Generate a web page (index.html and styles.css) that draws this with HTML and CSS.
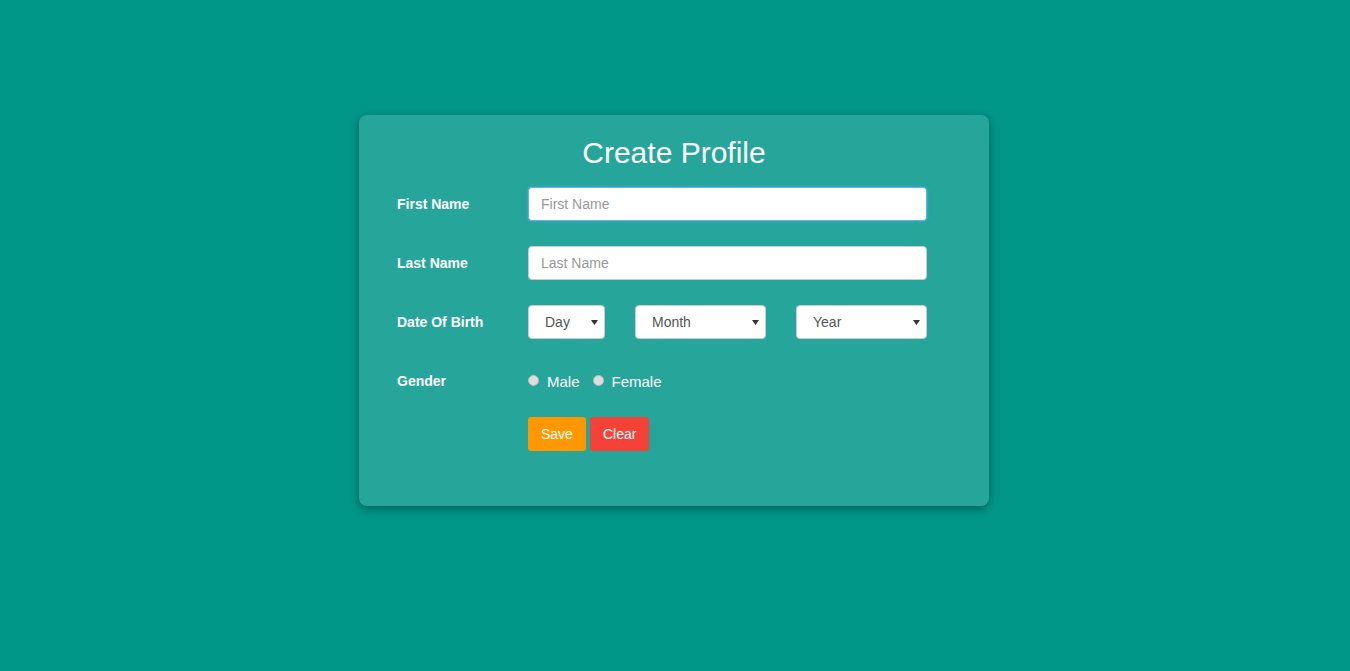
FILE: index.html
```html
<!DOCTYPE html>
<html>
<head>
<meta charset="utf-8">
<link rel="stylesheet" href="styles.css">
</head>
<body>
<div class="card">
  <h1 class="title">Create Profile</h1>
  <form class="form">
    <label class="label">First Name</label>
    <div class="control"><input class="input focused" type="text" placeholder="First Name"></div>
    <label class="label">Last Name</label>
    <div class="control"><input class="input" type="text" placeholder="Last Name"></div>
    <label class="label">Date Of Birth</label>
    <div class="control dob">
      <select class="select day"><option>Day</option></select>
      <select class="select month"><option>Month</option></select>
      <select class="select year"><option>Year</option></select>
    </div>
    <label class="label">Gender</label>
    <div class="control radios">
      <label class="radio"><span class="dot"></span>Male</label>
      <label class="radio"><span class="dot"></span>Female</label>
    </div>
    <span></span>
    <div class="control buttons">
      <button type="button" class="btn save">Save</button>
      <button type="button" class="btn clear">Clear</button>
    </div>
  </form>
</div>
</body>
</html>
```
FILE: styles.css
```css
html, body {
  margin: 0;
  padding: 0;
  height: 100%;
}
body {
  background: #009688;
  font-family: "Liberation Sans", Arial, sans-serif;
  padding-top: 115px;
  box-sizing: border-box;
}
.card {
  width: 630px;
  margin: 0 auto 0 359px;
  background: #26a69a;
  border-radius: 8px;
  box-shadow: 0 3px 8px rgba(0, 0, 0, 0.35);
  padding: 21px 0 55px 38px;
  box-sizing: border-box;
}
.title {
  margin: 0 0 17px -38px;
  text-align: center;
  font-weight: normal;
  font-size: 30px;
  line-height: 34px;
  color: #fff;
}
.form {
  display: grid;
  grid-template-columns: 131px 399px;
  row-gap: 25px;
  align-items: center;
}
.label {
  color: #fff;
  font-weight: bold;
  font-size: 14px;
}
.control {
  height: 34px;
  display: flex;
  align-items: center;
}
.input {
  width: 100%;
  height: 34px;
  box-sizing: border-box;
  border: 1px solid #ccc;
  border-radius: 4px;
  padding: 0 12px;
  font-family: "Liberation Sans", Arial, sans-serif;
  font-size: 14px;
  color: #555;
  background: #fff;
  outline: none;
}
.input::placeholder {
  color: #999;
}
.input.focused {
  border-color: #66afe9;
  box-shadow: 0 0 3px rgba(102, 175, 233, 0.7);
}
.dob {
  gap: 30px;
}
.select {
  appearance: none;
  -webkit-appearance: none;
  height: 34px;
  box-sizing: border-box;
  border: 1px solid #ccc;
  border-radius: 4px;
  padding: 0 16px;
  font-family: "Liberation Sans", Arial, sans-serif;
  font-size: 14px;
  color: #555;
  background: #fff url("data:image/svg+xml;utf8,<svg xmlns='http://www.w3.org/2000/svg' width='7' height='5'><path d='M0 0h7L3.5 5z' fill='%23333'/></svg>") no-repeat right 6px center;
}
.day { width: 77px; }
.month { width: 131px; }
.year { width: 131px; }
.radios {
  gap: 13px;
}
.radio {
  display: flex;
  align-items: center;
  color: #fff;
  font-size: 15px;
}
.dot {
  width: 11px;
  height: 11px;
  border-radius: 50%;
  background: #ddd;
  border: 1px solid #bbb;
  margin-right: 8px;
  box-sizing: border-box;
  position: relative;
  top: -1px;
}
.buttons {
  gap: 4px;
  margin-top: -6px;
}
.btn {
  height: 34px;
  border: none;
  border-radius: 3px;
  padding: 0 13px;
  color: #fff;
  font-family: "Liberation Sans", Arial, sans-serif;
  font-size: 14px;
}
.save { background: #ff9800; }
.clear { background: #f44336; }
```
